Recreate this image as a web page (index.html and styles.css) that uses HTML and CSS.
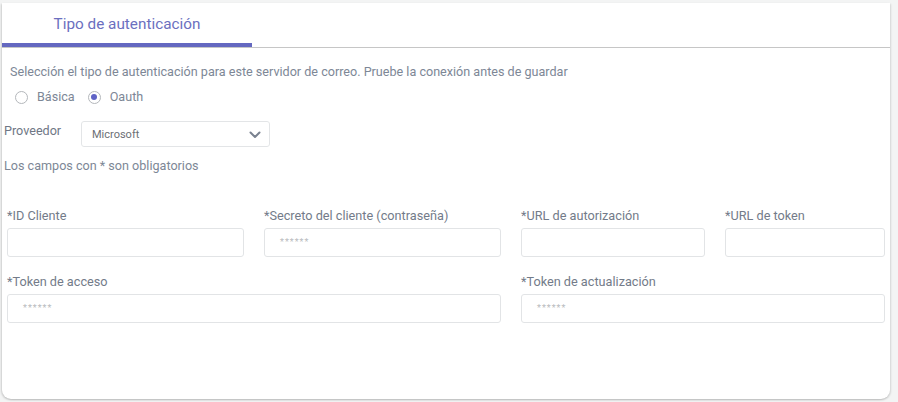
FILE: index.html
```html
<!DOCTYPE html>
<html lang="es">
<head>
  <meta charset="UTF-8">
  <meta name="viewport" content="width=device-width, initial-scale=1.0">
  <title>Tipo de autenticación</title>
  <link rel="stylesheet" href="styles.css">
</head>
<body>

  <div class="card">
    <!-- Tabs -->
    <div class="tabs">
      <div class="tab active">Tipo de autenticación</div>
    </div>

    <div class="content">
      <p class="hint">Selección el tipo de autenticación para este servidor de correo. Pruebe la conexión antes de guardar</p>

      <!-- Auth type -->
      <div class="radios">
        <label class="radio"><span class="dot"></span>Básica</label>
        <label class="radio checked"><span class="dot"></span>Oauth</label>
      </div>

      <div class="provider-row">
        <span class="provider-label">Proveedor</span>
        <div class="select">
          <span>Microsoft</span>
          <svg class="chevron" width="12" height="8" viewBox="0 0 12 8">
            <path d="M1.5 1.5 L6 6 L10.5 1.5" fill="none" stroke="#7a8290" stroke-width="2" stroke-linecap="round" stroke-linejoin="round"/>
          </svg>
        </div>
      </div>

      <p class="required">Los campos con * son obligatorios</p>

      <!-- Fields -->
      <div class="fields">
        <div class="field">
          <label>*ID Cliente</label>
          <div class="input"></div>
        </div>
        <div class="field">
          <label>*Secreto del cliente (contraseña)</label>
          <div class="input">******</div>
        </div>
        <div class="field">
          <label>*URL de autorización</label>
          <div class="input"></div>
        </div>
        <div class="field">
          <label>*URL de token</label>
          <div class="input"></div>
        </div>
        <div class="field wide">
          <label>*Token de acceso</label>
          <div class="input">******</div>
        </div>
        <div class="field wide">
          <label>*Token de actualización</label>
          <div class="input">******</div>
        </div>
      </div>
    </div>
  </div>

</body>
</html>
```

FILE: styles.css
```css
body {
  margin: 0;
  padding: 3px 8px 3px 2px;
  background-color: #f3f4f4;
  font-family: Roboto, "Noto Sans", sans-serif;
  color: #7d8796;
}
.card {
  background-color: #fff;
  height: 396px;
  border-radius: 0 0 9px 9px;
  box-shadow: -1px 1px 2px rgba(0, 0, 0, 0.15), 1px 1px 2px rgba(0, 0, 0, 0.12);
  overflow: hidden;
}
.tabs {
  display: flex;
  border-bottom: 1px solid #c6c6c6;
}
.tab {
  width: 250px;
  height: 40px;
  line-height: 42px;
  text-align: center;
  font-size: 15.3px;
  color: #6b6fc0;
}
.tab.active {
  border-bottom: 4px solid #6468c0;
}
.content {
  padding: 0 2px;
}
.hint {
  margin: 16px 0 0 6px;
  font-size: 12.6px;
  line-height: 16px;
}
.radios {
  display: flex;
  margin: 9px 0 0 11px;
  gap: 13px;
}
.radio {
  display: flex;
  align-items: center;
  gap: 9px;
  font-size: 12.6px;
  line-height: 16px;
}
.dot {
  width: 11px;
  height: 11px;
  border: 1px solid #b4b7bb;
  border-radius: 50%;
  display: flex;
  align-items: center;
  justify-content: center;
}
.radio.checked .dot::after {
  content: "";
  width: 6px;
  height: 6px;
  border-radius: 50%;
  background-color: #5f63c6;
}
.provider-row {
  display: flex;
  align-items: flex-start;
  margin-top: 16px;
}
.provider-label {
  width: 77px;
  font-size: 12.6px;
  line-height: 16px;
  padding-top: 2px;
  color: #6f7785;
}
.select {
  width: 169px;
  height: 24px;
  border: 1px solid #e3e5e7;
  border-radius: 3px;
  display: flex;
  align-items: center;
  justify-content: space-between;
  padding: 0 8px 0 10px;
  font-size: 11px;
  color: #6c6f75;
}
.chevron {
  margin-top: 1px;
}
.required {
  margin: 11px 0 0;
  font-size: 12.6px;
  line-height: 16px;
}
.fields {
  display: grid;
  grid-template-columns: 237px 237px 184px 160px;
  column-gap: 20px;
  row-gap: 17px;
  margin: 34px 0 0 3px;
}
.field {
  display: flex;
  flex-direction: column;
  gap: 4px;
}
.field.wide {
  grid-column: span 2;
}
.field label {
  font-size: 12.7px;
  line-height: 16px;
  color: #737b89;
}
.input {
  height: 27px;
  border: 1px solid #e2e4e6;
  border-radius: 3px;
  padding-left: 15px;
  font-size: 9px;
  line-height: 27px;
  color: #b9bbbe;
  letter-spacing: 1px;
}
```
